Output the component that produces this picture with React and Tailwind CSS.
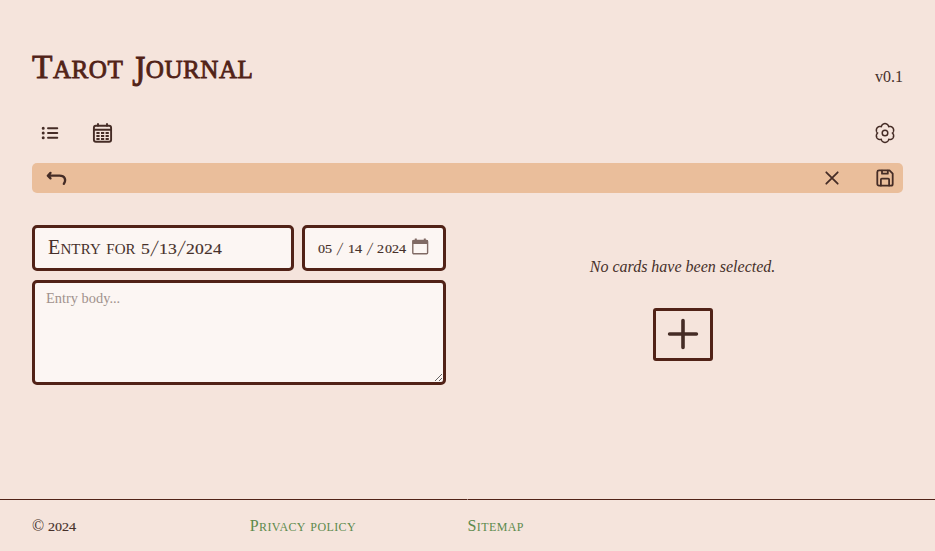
import React from 'react';

const gearPath = (() => {
  const pts = [];
  for (let i = 0; i < 180; i++) {
    const t = (i / 180) * Math.PI * 2;
    const r = 7.3 + 2.1 * Math.pow(Math.abs(Math.cos(3 * (t + Math.PI / 2))), 0.8);
    pts.push(`${(12 + r * Math.cos(t)).toFixed(2)} ${(12 + r * Math.sin(t)).toFixed(2)}`);
  }
  return `M${pts.join('L')}Z`;
})();

function Icon({ children, size = 24, width = 1.5 }) {
  return (
    <svg width={size} height={size} viewBox="0 0 24 24" fill="none" stroke="#452c26" strokeWidth={width} strokeLinecap="round" strokeLinejoin="round">
      {children}
    </svg>
  );
}

// Small capitals with matching low numerals and a slanted slash.
function Caps({ text }) {
  return (
    <span className="whitespace-pre">
      {text.split(/(\d|\/|[a-z]+)/).map((part, i) => {
        if (part === '/') {
          return <span key={i} className="inline-block w-[0.47em] origin-center translate-y-[0.05em] -skew-x-[13deg] scale-y-[1.15] text-center">/</span>;
        }
        if (/\d/.test(part)) {
          return <span key={i} className="inline-block w-[0.585em] scale-x-[1.16] text-center text-[0.76em] tracking-normal [-webkit-text-stroke:0.15px_currentColor]">{part}</span>;
        }
        if (/[a-z]/.test(part)) {
          return <span key={i} className="text-[0.75em] uppercase">{part}</span>;
        }
        return part;
      })}
    </span>
  );
}

export default function App() {
  return (
    <div className="flex h-[551px] w-[935px] flex-col overflow-hidden bg-[#f5e4dc] font-['Liberation_Serif',serif] text-[#46302a]">
      <header className="flex h-[105px] items-start justify-between px-8 pt-[46px]">
        <h1 className="-mt-px text-[33.5px] leading-[43px] tracking-[0.5px] text-[#512217] [-webkit-text-stroke:0.8px_#512217]">
          <Caps text="Tarot " />
          <span className="inline-block origin-[50%_26%] translate-y-[1px] scale-y-[1.32]">J</span>
          <Caps text="ournal" />
        </h1>
        <span className="pt-[21px] text-[16px] leading-5">v0.1</span>
      </header>
      <nav className="flex h-[58px] items-center px-[38px] pb-[2px]">
        <Icon width={1.9}>
          <path d="M10 7.2h9.3M10 12h9.3M10 16.8h9.3" />
          <path d="M5.2 7.2h.01M5.2 12h.01M5.2 16.8h.01" strokeWidth="3" />
        </Icon>
        <div className="ml-[28px]">
          <Icon width={1.9}>
            <rect x="3.9" y="4.7" width="17.2" height="16" rx="2" />
            <path d="M3.9 8.8h17.2M8 3v1.7M17 3v1.7" />
            <path d="M6.4 12h3.2M11 12h3.2M15.6 12h3.2M6.4 15h3.2M11 15h3.2M15.6 15h3.2M6.4 18h3.2M11 18h3.2M15.6 18h3.2" strokeLinecap="butt" strokeWidth="2" />
          </Icon>
        </div>
        <div className="ml-auto">
          <Icon width={1.5}>
            <path d={gearPath} />
            <circle cx="12" cy="12" r="2.8" />
          </Icon>
        </div>
      </nav>
      <div className="mx-8 flex h-[30px] shrink-0 items-center rounded-[5px] bg-[#eabe9b] px-[6px]">
        <div className="ml-[7px]">
          <Icon width={2.3}>
            <path d="M5.5 6.9 2.8 9.7l2.7 2.7M3 9.7h11.5c5.5 0 7 4 4.3 8.1" />
          </Icon>
        </div>
        <div className="ml-auto flex gap-[29px]">
          <Icon width={1.8}><path d="m6.3 6.3 11.4 11.4M17.7 6.3 6.3 17.7" /></Icon>
          <Icon width={1.8}>
            <path d="M6 4.4h10.5l3.2 3.2V18a1.7 1.7 0 0 1-1.7 1.7H6A1.7 1.7 0 0 1 4.3 18V6A1.7 1.7 0 0 1 6 4.4Z" />
            <path d="M7.9 19.5v-6a.9.9 0 0 1 .9-.9h6.4a.9.9 0 0 1 .9.9v6M9 4.6v3.1h5.8V4.6" />
          </Icon>
        </div>
      </div>
      <main className="flex grow gap-4 px-8 pt-8">
        <section className="w-[414px]">
          <div className="flex gap-2">
            <div className="flex h-[46px] w-[262px] items-center rounded-[5px] border-3 border-[#512217] bg-[#fcf6f3] px-[13px] pb-[2px] text-[20px] tracking-[0.15px]">
              <Caps text="Entry for 5/13/2024" />
            </div>
            <div className="flex h-[46px] w-[144px] items-center rounded-[5px] border-3 border-[#512217] bg-[#fcf6f3] pr-[14px] pl-[13px] text-[16px]">
              <Caps text="05 / 14 / 2024" />
              <svg className="mb-1 ml-auto shrink-0" width="17" height="17" viewBox="0 0 17 17">
                <rect x="0.8" y="2.5" width="14.8" height="13.2" rx="1" fill="none" stroke="#806a64" strokeWidth="1.4" />
                <path d="M.6 2h15.4v4H.6zM2.8.4h2V3h-2zM11.8.4h2V3h-2z" fill="#806a64" />
              </svg>
            </div>
          </div>
          <textarea
            placeholder="Entry body..."
            className="mt-[9px] block h-[105px] w-full rounded-[5px] border-3 border-[#512217] bg-[#fcf6f3] px-[11px] py-[7px] text-[14.4px] leading-[17px] placeholder:text-[#a1928d]"
          />
        </section>
        <section className="flex grow flex-col items-center pt-[32px]">
          <p className="text-[16px] leading-5 italic">No cards have been selected.</p>
          <button className="mt-[31px] flex h-[53px] w-[60px] items-center justify-center rounded-[3px] border-3 border-[#512217] pb-[2px]">
            <Icon size={48} width={1.8}><path d="M12 5.3v13.4M5.3 12h13.4" /></Icon>
          </button>
        </section>
      </main>
      <footer className="h-[52px] shrink-0">
        <div className="flex h-px">
          <div className="w-[467px] bg-[#512217]" />
          <div className="w-px bg-[#a4857c]" />
          <div className="grow bg-[#512217]" />
        </div>
        <div className="grid grid-cols-4 px-8 pt-[16px] text-[16px] leading-5">
          <span><Caps text="© 2024" /></span>
          <a className="tracking-[0.4px] text-[#5c8a4c]"><Caps text="Privacy policy" /></a>
          <a className="tracking-[0.4px] text-[#5c8a4c]"><Caps text="Sitemap" /></a>
        </div>
      </footer>
    </div>
  );
}
